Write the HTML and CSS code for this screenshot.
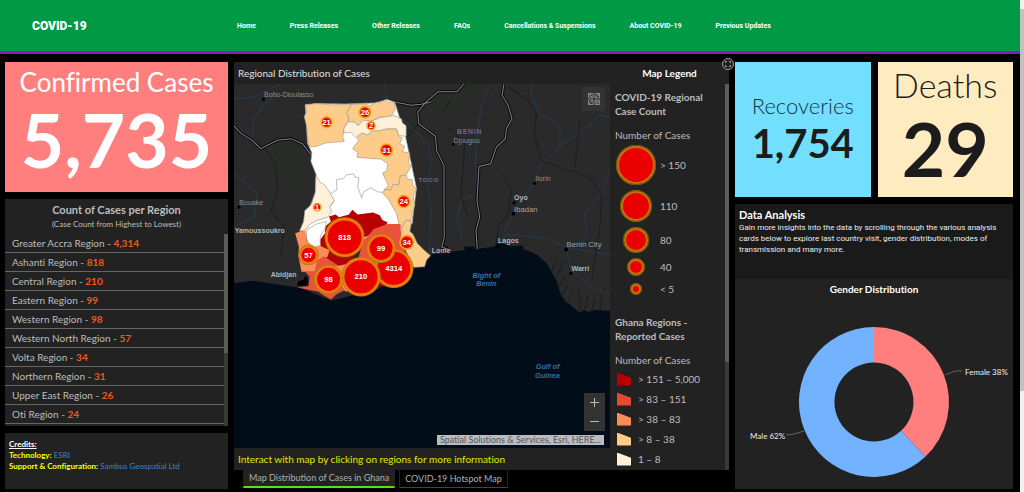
FILE: index.html
```html
<!DOCTYPE html>
<html lang="en">
<head>
  <meta charset="UTF-8">
  <meta name="viewport" content="width=device-width, initial-scale=1.0">
  <title>COVID-19</title>
  <link rel="stylesheet" href="styles.css">
</head>
<body>

<div class="page">
  <header class="header">
    <a class="brand" href="#">COVID-19</a>
    <nav class="nav">
      <a href="#">Home</a>
      <a href="#">Press Releases</a>
      <a href="#">Other Releases</a>
      <a href="#">FAQs</a>
      <a href="#">Cancellations &amp; Suspensions</a>
      <a href="#">About COVID-19</a>
      <a href="#">Previous Updates</a>
    </nav>
  </header>

  <main class="dashboard">
    <!-- Left column -->
    <div class="column">
      <section class="stat confirmed">
        <h2>Confirmed Cases</h2>
        <p>5,735</p>
      </section>

      <section class="card regions">
        <h3>Count of Cases per Region</h3>
        <p class="hint">(Case Count from Highest to Lowest)</p>
        <div class="scroll-area">
          <ul class="region-list">
            <li>Greater Accra Region - <b>4,314</b></li>
            <li>Ashanti Region - <b>818</b></li>
            <li>Central Region - <b>210</b></li>
            <li>Eastern Region - <b>99</b></li>
            <li>Western Region - <b>98</b></li>
            <li>Western North Region - <b>57</b></li>
            <li>Volta Region - <b>34</b></li>
            <li>Northern Region - <b>31</b></li>
            <li>Upper East Region - <b>26</b></li>
            <li>Oti Region - <b>24</b></li>
          </ul>
          <div class="track"><div class="thumb"></div></div>
        </div>
      </section>

      <section class="card credits">
        <p class="credits-title">Credits:</p>
        <p><b>Technology:</b> <a href="#">ESRI</a></p>
        <p><b>Support &amp; Configuration:</b> <a href="#">Sambus Geospatial Ltd</a></p>
      </section>
    </div>

    <!-- Map column -->
    <div class="column map-column">
      <section class="card map-card">
        <div class="map-side">
          <h3 class="map-title">Regional Distribution of Cases</h3>
          <div class="map">
            <svg class="map-svg" viewBox="0 0 1125 1092" preserveAspectRatio="xMidYMid slice" role="img" aria-label="Map of cases in Ghana">
              <rect class="land" width="1125" height="1092"/>
              <path class="forest" d="M92 190 150 165 200 195 215 280 170 320 120 260zM555 75 650 30 770 0 700 60 610 85 560 110z"/>
              <path class="sea" d="M0 597 60 590 120 600 200 612 290 650 430 615 538 550 590 512 660 502 723 496 788 486 820 492 858 493 880 500 908 513 935 538 953 568 965 590 973 618 980 635 993 653 1010 665 1033 685 1048 678 1060 684 1080 678 1125 680V1092H0z"/>
              <path class="sea" d="M690 488h30v10h-30zM780 484 800 478 830 487 866 485 864 497 790 496z"/>
              <path class="creek" d="M952 560 962 530M963 580 978 552 985 530M973 605 990 580M982 630 1000 604M1003 652 1012 622M1030 682 1038 650 1030 620M1050 676 1060 635M1070 680 1080 645M1095 676 1100 635 1112 610"/>
              <!-- Roads and rivers -->
              <g class="river">
                <path d="M770 0 742 60 730 140 722 230 726 330 680 350 668 400 682 470"/>
                <path d="M890 0 890 40 915 90 975 125 976 190 920 240 895 300 838 385 806 448"/>
                <path d="M976 185 1060 130 1090 95 1125 98M788 475 820 450 940 465 996 492 1125 512M996 500 1010 560 1060 600 1125 635M1125 260 1100 330 1050 390 1055 450 1040 490"/>
                <path d="M0 45 60 40 140 0M115 40 60 100 55 160M450 0 460 70 520 120 580 180 590 230 580 300 590 380 585 505"/>
                <path d="M90 50 130 20M0 270 70 330 60 400 0 430"/>
              </g>
              <g class="road">
                <path d="M820 10 880 50 905 90 900 160 920 230 1060 280 1100 330 1095 430 1070 590M1035 110 1020 250M640 130 690 180 680 340 700 400M800 270 830 320 820 390 790 430 785 480M90 190 125 240 130 320 110 380 150 430 140 520M560 110 520 160M620 90 650 50"/>
              </g>
              <!-- Borders -->
              <g class="border">
                <path d="M0 127 22 150 55 170 80 195 130 170 170 165 205 180 232 215M480 55 530 65 560 62 590 55M688 0 668 25 610 25 575 55 550 85 553 120 603 158 606 200 628 245 629 460 622 500 640 490M808 0 802 35 820 65 832 105 815 135 812 165 785 190 768 240 733 248 730 300 727 350 735 400 724 440 728 496"/>
              </g>
              <g class="border-line">
                <path d="M0 127 22 150 55 170 80 195 130 170 170 165 205 180 232 215M480 55 530 65 560 62 590 55M688 0 668 25 610 25 575 55 550 85 553 120 603 158 606 200 628 245 629 460 622 490 640 496M808 0 802 35 820 65 832 105 815 135 812 165 785 190 768 240 733 248 730 300 727 350 735 400 724 440 728 496"/>
              </g>

              <!-- Ghana regions -->
              <g class="region" transform="translate(168 18)">
                <path class="r0" d="M45 45 80 42 165 43 255 40 290 30 313 38 345 140 358 200 378 295 365 400 320 440 100 490 32 418 75 310 78 255 62 215 65 190 52 160z"/>
                <path class="r2" d="M45 47 80 42 120 46 183 44 178 56 169 68 176 90 162 112 160 130 157 142 162 155 105 160 80 170 58 171 52 145 50 112 42 80 50 68z"/>
                <path class="r2" d="M183 45 220 43 240 48 258 38 274 40 285 30 294 38 312 38 314 60 303 80 270 82 248 92 222 100 208 110 192 97 174 96 176 88 169 68 178 56z"/>
                <path class="r1" d="M174 96 192 97 204 108 218 92 245 94 270 84 303 79 312 78 333 88 336 100 347 108 347 140 325 138 318 118 290 118 265 124 245 124 232 136 215 130 198 145 182 128 162 130 160 118z"/>
                <path class="r2" d="M202 138 215 130 232 136 245 124 265 124 290 118 318 118 323 140 335 145 328 162 343 170 335 186 358 190 354 218 362 230 350 250 345 262 330 258 325 285 308 284 302 300 280 300 294 288 284 266 276 250 290 242 292 222 272 208 240 206 200 203 203 188 187 178 196 164 204 156z"/>
                <path class="r2" d="M330 258 345 256 352 268 366 270 366 285 378 297 368 318 373 345 364 372 367 400 358 390 345 392 334 414 325 400 318 370 304 346 292 326 275 308 285 300 302 300 308 284 325 285z"/>
                <path class="r2" d="M345 392 358 392 362 402 358 424 368 434 380 460 400 480 420 497 408 510 402 530 370 532 352 495 340 470 326 460 334 414z"/>
                <path class="r1" d="M77 255 90 278 102 284 120 310 132 332 118 350 124 366 112 382 80 392 58 404 46 420 28 424 40 396 44 362 64 344 76 305z"/>
                <path class="line" d="M120 312 140 300 138 270 160 266 168 256 190 252 194 262 206 264 202 290 214 325 220 306 240 294 262 306 276 308M132 332 120 350"/>
                <path class="r5" d="M116 380 136 374 146 382 176 374 186 360 202 374 248 368 268 376 276 390 292 398 282 410 250 418 240 435 215 445 190 500 160 530 120 518 92 475 88 452 104 430 105 410 122 395z"/>
                <path class="r0" d="M50 420 80 402 108 395 105 415 90 438 90 466 72 472 54 460 48 440z"/>
                <path class="r3" d="M15 430 45 420 50 452 70 472 90 468 118 480 112 500 86 512 74 545 34 545 25 500 26 470z"/>
                <path class="r4" d="M235 435 250 418 290 402 330 402 332 435 325 460 345 480 330 500 260 530 205 500 220 450z"/>
                <path class="r4" d="M80 512 100 498 150 530 160 560 165 600 140 612 122 628 98 615 85 605 50 598 22 592 55 588 58 560 45 545 74 545z"/>
                <path class="r3" d="M130 530 180 520 240 510 262 530 262 590 230 598 165 604 152 580z"/>
                <path class="r5" d="M258 530 300 505 345 485 368 530 345 570 270 590z"/>
              </g>

              <!-- Case bubbles -->
              <g class="bubbles" transform="translate(168 18)">
                <circle class="halo" cx="310" cy="535" r="59"/>
                <circle cx="310" cy="535" r="53"/>
                <circle class="halo" cx="163" cy="442" r="60"/>
                <circle cx="163" cy="442" r="54"/>
                <circle class="halo" cx="272" cy="475" r="44"/>
                <circle cx="272" cy="475" r="38"/>
                <circle class="halo" cx="212" cy="560" r="59"/>
                <circle cx="212" cy="560" r="53"/>
                <circle class="halo" cx="115" cy="568" r="44"/>
                <circle cx="115" cy="568" r="38"/>
                <circle class="halo" cx="55" cy="495" r="31"/>
                <circle cx="55" cy="495" r="25"/>
              </g>
              <g class="bubbles small" transform="translate(168 18)">
                <circle cx="349" cy="457" r="20"/>
                <circle cx="340" cy="335" r="18"/>
                <circle cx="288" cy="181" r="18"/>
                <circle cx="109" cy="98" r="16"/>
                <circle cx="224" cy="68" r="17"/>
                <circle cx="242" cy="108" r="12"/>
                <circle cx="81" cy="352" r="11"/>
              </g>
              <g class="counts" transform="translate(168 26)">
                <text x="310" y="535">4314</text>
                <text x="163" y="442">818</text>
                <text x="272" y="475">99</text>
                <text x="212" y="560">210</text>
                <text x="115" y="568">98</text>
                <text x="55" y="495">57</text>
                <text x="349" y="457">34</text>
                <text x="340" y="335">24</text>
                <text x="288" y="181">31</text>
                <text x="109" y="98">21</text>
                <text x="224" y="68">26</text>
                <text x="242" y="108">2</text>
                <text x="81" y="352">1</text>
              </g>

              <!-- Place names -->
              <g class="dots">
                <circle cx="88" cy="47" r="5"/>
                <circle cx="15" cy="370" r="5"/>
                <circle cx="656" cy="182" r="4"/>
                <circle cx="899" cy="299" r="5"/>
                <circle cx="838" cy="357" r="5"/>
                <circle cx="836" cy="390" r="6"/>
                <circle cx="788" cy="486" r="6"/>
                <circle cx="994" cy="497" r="6"/>
                <circle cx="1008" cy="568" r="5"/>
                <path d="M188 604 194 590 208 588 212 576 221 584 220 604z"/>
              </g>
              <g class="places">
                <text x="90" y="40">Bobo-Dioulasso</text>
                <text x="16" y="365">Bouake</text>
                <text x="2" y="448" class="strong">Yamoussoukro</text>
                <text x="110" y="578" class="strong">Abidjan</text>
                <text x="657" y="177">Djougou</text>
                <text x="902" y="292">Ilorin</text>
                <text x="838" y="350" class="strong">Oyo</text>
                <text x="838" y="383" class="big">Ibadan</text>
                <text x="790" y="478" class="strong">Lagos</text>
                <text x="592" y="508" class="strong">Lome</text>
                <text x="995" y="489" class="big">Benin City</text>
                <text x="1010" y="562" class="strong">Warri</text>
              </g>
              <g class="country">
                <text x="667" y="150">BENIN</text>
                <text x="552" y="294" class="dim">TOGO</text>
              </g>
              <g class="water">
                <text x="755" y="582">Bight of</text>
                <text x="755" y="606">Benin</text>
                <text x="938" y="854">Gulf of</text>
                <text x="938" y="881">Guinea</text>
              </g>
            </svg>

            <button class="map-btn basemap" aria-label="Basemap">
              <svg viewBox="0 0 12 12" width="12" height="12">
                <path d="M.5.5h4.500v4.500H.5zM7 .5h4.500v4.500H7zM.5 7h4.500v4.500H.5zM7 7h4.500v4.500H7zM.5.5 5 5M7 5l4.500-4.500M.5 11.500 5 7M7 9h4.500M9 7v4.500M2.500 1v3M9 2h2"/>
              </svg>
            </button>
            <div class="zoom">
              <button class="map-btn" aria-label="Zoom in">
                <svg viewBox="0 0 9 9" width="9" height="9"><path d="M4.500 0v9M0 4.500h9"/></svg>
              </button>
              <button class="map-btn" aria-label="Zoom out">
                <svg viewBox="0 0 9 9" width="9" height="9"><path d="M0 4.500h9"/></svg>
              </button>
            </div>
            <span class="attribution">Spatial Solutions &amp; Services, Esri, HERE...</span>
          </div>
          <p class="map-note">Interact with map by clicking on regions for more information</p>
        </div>

        <div class="legend-side">
          <h3 class="legend-title">Map Legend</h3>
          <div class="scroll-area">
            <div class="legend">
              <h4>COVID-19 Regional Case Count</h4>
              <p>Number of Cases</p>
              <ul class="sizes">
                <li><span class="size s1"></span>&gt; 150</li>
                <li><span class="size s2"></span>110</li>
                <li><span class="size s3"></span>80</li>
                <li><span class="size s4"></span>40</li>
                <li><span class="size s5"></span>&lt; 5</li>
              </ul>
              <h4>Ghana Regions - Reported Cases</h4>
              <p>Number of Cases</p>
              <ul class="classes">
                <li><span class="swatch c5"></span>&gt; 151 – 5,000</li>
                <li><span class="swatch c4"></span>&gt; 83 – 151</li>
                <li><span class="swatch c3"></span>&gt; 38 – 83</li>
                <li><span class="swatch c2"></span>&gt; 8 – 38</li>
                <li><span class="swatch c1"></span>1 – 8</li>
              </ul>
            </div>
            <div class="track"><div class="thumb legend-thumb"></div></div>
          </div>
        </div>

        <button class="expand" aria-label="Expand">
          <svg viewBox="0 0 12 12" width="12" height="12">
            <circle cx="6" cy="6" r="5.500"/>
            <path d="M3.500 5V3.500H5M7 3.500h1.500V5M8.500 7v1.500H7M5 8.500H3.500V7"/>
          </svg>
        </button>
      </section>

      <div class="tabs">
        <button class="tab active">Map Distribution of Cases in Ghana</button>
        <button class="tab">COVID-19 Hotspot Map</button>
      </div>
    </div>

    <!-- Right column -->
    <div class="column">
      <div class="stat-row">
        <section class="stat recoveries">
          <h2>Recoveries</h2>
          <p>1,754</p>
        </section>
        <section class="stat deaths">
          <h2>Deaths</h2>
          <p>29</p>
        </section>
      </div>

      <section class="card analysis">
        <div class="analysis-text">
          <h3>Data Analysis</h3>
          <p>Gain more insights into the data by scrolling through the various analysis cards below to explore last country visit, gender distribution, modes of transmission and many more.</p>
        </div>
        <h4 class="chart-title">Gender Distribution</h4>
        <svg class="chart" viewBox="0 0 278 190" role="img" aria-label="Gender distribution">
          <path class="female" d="M139 28A75 75 0 0 1 190.300 157.700L166 131.800A39.500 39.500 0 0 0 139 63.500z"/>
          <path class="male" d="M190.300 157.700A75 75 0 1 1 139 28V63.500A39.500 39.500 0 1 0 166 131.800z"/>
          <path class="leader" d="M210 76C216 74 220 71 227 72M69 132C62 134 58 136 51 136"/>
          <text x="230" y="76">Female 38%</text>
          <text x="15" y="140">Male 62%</text>
        </svg>
      </section>
    </div>
  </main>
</div>

<div class="page-scroll"><div class="page-thumb"></div></div>

</body>
</html>
```
FILE: styles.css
```css
* {
  box-sizing: border-box;
}
body {
  margin: 0;
  height: 100vh;
  display: flex;
  background: #000;
  color: #bdbdbd;
  font-family: Lato, "Open Sans", sans-serif;
  font-size: 10px;
  font-variant-ligatures: none;
  overflow: hidden;
}
h2, h3, h4, p, ul {
  margin: 0;
  padding: 0;
}
ul {
  list-style: none;
}
a {
  text-decoration: none;
}
button {
  font-family: inherit;
  padding: 0;
  border: none;
  cursor: pointer;
}
.page {
  flex: 1;
  min-width: 0;
  display: flex;
  flex-direction: column;
}
.page-scroll {
  width: 4px;
  background: #f1f1f1;
  padding-top: 9px;
}
.page-thumb {
  height: 79%;
  background: #c1c1c1;
}

/* Header */
.header {
  display: flex;
  align-items: center;
  height: 54px;
  padding-left: 32px;
  background: #009a47;
  border-bottom: 3px solid #8a1bb5;
}
.brand {
  width: 205px;
  color: #fff;
  font-family: Roboto, sans-serif;
  font-size: 12px;
  font-weight: 900;
}
.nav {
  display: flex;
  gap: 34px;
}
.nav a {
  color: #fff;
  font-family: Roboto, sans-serif;
  font-size: 7px;
  font-weight: bold;
  line-height: 12px;
  white-space: nowrap;
}

/* Dashboard */
.dashboard {
  flex: 1;
  min-height: 0;
  display: grid;
  grid-template-columns: 223fr 495fr 278fr;
  gap: 6px;
  padding: 8px 7px 3px 5px;
}
.column {
  min-width: 0;
  min-height: 0;
  display: flex;
  flex-direction: column;
  gap: 7px;
}
.card {
  background: #222;
}
.stat {
  display: flex;
  flex-direction: column;
  align-items: center;
  justify-content: center;
}
.stat h2 {
  font-weight: 300;
}
.stat p {
  font-weight: bold;
}
.confirmed {
  padding: 6px 0 10px;
  background: #ff7f7f;
  color: #fff;
}
.confirmed h2 {
  font-size: 26px;
  font-weight: 400;
  line-height: 28px;
}
.confirmed p {
  font-size: 75px;
  line-height: 86px;
}
.regions {
  flex: 1;
  min-height: 0;
  display: flex;
  flex-direction: column;
  padding-top: 4px;
  text-align: center;
}
.regions h3 {
  font-size: 11px;
  line-height: 14px;
}
.hint {
  font-size: 8px;
  line-height: 14px;
}
.scroll-area {
  flex: 1;
  min-height: 0;
  display: flex;
}
.track {
  width: 4px;
  background: #3a3a3a;
}
.thumb {
  height: 62%;
  background: #5c5c5c;
}
.regions .scroll-area {
  margin-top: 3px;
}
.region-list {
  flex: 1;
  overflow: hidden;
  text-align: left;
}
.region-list li {
  height: 19px;
  padding-left: 7px;
  border-bottom: 1px solid #666;
  font-size: 10px;
  line-height: 18px;
}
.region-list b {
  color: #f0591c;
}
.credits {
  height: 56px;
  padding: 6px 4px;
  font-size: 8px;
  line-height: 11px;
}
.credits-title {
  color: #fff;
  font-weight: bold;
  text-decoration: underline;
}
.credits b {
  color: #ff0;
}
.credits a {
  color: #3a86c8;
}

/* Map */
.map-column {
  gap: 0;
}
.map-card {
  position: relative;
  flex: 1;
  min-height: 0;
  display: flex;
}
.map-side {
  flex: 1;
  min-width: 0;
  display: flex;
  flex-direction: column;
}
.map-title {
  padding-left: 4px;
  color: #e0e0e0;
  font-size: 10px;
  font-weight: normal;
  line-height: 22px;
}
.map {
  position: relative;
  flex: 1;
  min-height: 0;
}
.map-svg {
  display: block;
  width: 100%;
  height: 100%;
}
.land {
  fill: #2a2a2a;
}
.forest {
  fill: #282d28;
}
.sea {
  fill: #010d18;
}
.creek {
  fill: none;
  stroke: #171d22;
  stroke-width: 3;
}
.river {
  fill: none;
  stroke: #263746;
  stroke-width: 4;
}
.road {
  fill: none;
  stroke: #1e1e21;
  stroke-width: 3;
}
.border {
  fill: none;
  stroke: #08080a;
  stroke-width: 9;
}
.border-line {
  fill: none;
  stroke: #85818a;
  stroke-width: 3;
}
.region path {
  stroke: #a09c94;
  stroke-width: 2;
  stroke-linejoin: round;
}
.r0 { fill: #fff; }
.r1 { fill: #fef0d9; }
.r2 { fill: #fdcc8a; }
.region .r3 { fill: #fc8d59; stroke: none; }
.region .r4 { fill: #e9533a; stroke: none; }
.region .r5 { fill: #b80000; stroke: none; }
.region .line { fill: none; }
.bubbles {
  fill: #ea0000;
  stroke: #f07a0c;
  stroke-width: 7;
}
.bubbles .halo {
  fill: #b0820c;
  stroke: none;
}
.small {
  stroke: #f7a41d;
  stroke-width: 5;
}
.counts {
  fill: #fff;
  font-family: "Liberation Sans", sans-serif;
  font-size: 23px;
  font-weight: bold;
  text-anchor: middle;
}
.places {
  fill: #8f8f8f;
  font-family: "Liberation Sans", sans-serif;
  font-size: 21px;
}
.places .big {
  fill: #a0a0a0;
  font-size: 23px;
}
.places .strong {
  fill: #b4b4b4;
  font-size: 21px;
  font-weight: bold;
}
.country {
  fill: #78628c;
  font-family: "Liberation Sans", sans-serif;
  font-size: 21px;
  font-weight: bold;
  letter-spacing: 2px;
}
.country .dim {
  font-size: 18px;
}
.water {
  fill: #3d6f9e;
  font-family: "Liberation Sans", sans-serif;
  font-size: 22px;
  font-style: italic;
  font-weight: bold;
  text-anchor: middle;
}
.dots {
  fill: #000;
}
.map-btn {
  display: flex;
  align-items: center;
  justify-content: center;
  background: #333;
}
.map-btn svg {
  fill: none;
  stroke: #bbb;
  stroke-width: 1;
}
.basemap {
  position: absolute;
  top: 3px;
  right: 5px;
  width: 23px;
  height: 24px;
}
.basemap svg {
  stroke: #888;
}
.zoom {
  position: absolute;
  right: 5px;
  bottom: 17px;
}
.zoom .map-btn {
  width: 21px;
  height: 19px;
}
.attribution {
  position: absolute;
  right: 6px;
  bottom: 3px;
  padding: 0 3px;
  background: #b9bcc1;
  color: #555;
  font-size: 9px;
  line-height: 10px;
}
.map-note {
  padding-left: 4px;
  color: #e6e600;
  font-size: 10px;
  line-height: 22px;
}
.legend-side {
  width: 119px;
  display: flex;
  flex-direction: column;
}
.legend-title {
  color: #fff;
  font-size: 10px;
  line-height: 22px;
  text-align: center;
}
.legend {
  flex: 1;
  min-width: 0;
  overflow: hidden;
  padding: 6px 14px 0 5px;
}
.legend h4 {
  font-size: 10px;
  line-height: 14px;
}
.legend p {
  margin-top: 9px;
  font-size: 10px;
  line-height: 16px;
}
.legend li {
  align-items: center;
}
.sizes {
  margin: 2px 0 18px;
}
.sizes li {
  display: grid;
  grid-template-columns: 42px 1fr;
  gap: 3px;
  min-height: 16px;
  margin-bottom: 5px;
}
.size {
  justify-self: center;
  border: 3px solid #c4700c;
  border-radius: 50%;
  background: #ea0000;
  outline: 1px solid #5c5a10;
  outline-offset: -1px;
}
.s1 { width: 40px; height: 40px; }
.s2 { width: 32px; height: 32px; }
.s3 { width: 26px; height: 26px; }
.s4 { width: 18px; height: 18px; }
.s5 { width: 12px; height: 12px; }
.classes {
  margin-top: 1px;
}
.classes li {
  display: flex;
  gap: 7px;
  height: 20px;
  padding-left: 2px;
  white-space: nowrap;
}
.swatch {
  width: 14px;
  height: 13px;
  clip-path: polygon(0 0, 100% 40%, 100% 100%, 0 100%);
}
.c5 { background: #b80000; }
.c4 { background: #e34a33; }
.c3 { background: #fc8d59; }
.c2 { background: #fdcc8a; }
.c1 { background: #fef0d9; }
.legend-thumb {
  height: 72%;
}
.expand {
  position: absolute;
  top: -4px;
  right: -5px;
  width: 12px;
  height: 12px;
  background: none;
}
.expand svg {
  display: block;
  fill: #222;
  stroke: #999;
  stroke-width: 1;
}
.tabs {
  display: flex;
  gap: 4px;
  height: 19px;
  padding: 0 9px 1px;
}
.tab {
  padding: 0 5px;
  background: #000;
  border: 1px solid #222;
  border-top: none;
  border-bottom: 1px solid #444;
  color: #b0b0b0;
  font-size: 9px;
  line-height: 16px;
}
.tab.active {
  background: #222;
  border-bottom: 2px solid #58e01c;
}

/* Right column */
.stat-row {
  display: grid;
  grid-template-columns: 1fr 1fr;
  gap: 7px;
  height: 135px;
}
.stat-row .stat {
  color: #1c1c1c;
}
.recoveries {
  padding-bottom: 2px;
  background: #73dfff;
}
.stat-row .recoveries h2 {
  color: #123644;
  font-size: 22px;
  line-height: 28px;
}
.recoveries p {
  font-size: 40px;
  line-height: 46px;
}
.deaths {
  padding-bottom: 3px;
  background: #ffebc0;
}
.deaths h2 {
  font-size: 34px;
  line-height: 40px;
}
.deaths p {
  font-size: 75px;
  line-height: 86px;
}
.analysis {
  flex: 1;
  min-height: 0;
  display: flex;
  flex-direction: column;
}
.analysis-text {
  height: 75px;
  padding: 4px 0 4px 4px;
  background: #1a1a1a;
  color: #eee;
}
.analysis-text h3 {
  color: #fff;
  font-size: 11px;
  line-height: 14px;
}
.analysis-text p {
  font-family: Roboto, sans-serif;
  font-size: 8px;
  line-height: 11px;
}
.chart-title {
  color: #fff;
  font-size: 10px;
  line-height: 20px;
  text-align: center;
}
.chart {
  flex: 1;
  min-height: 0;
  width: 100%;
}
.chart text {
  fill: #eee;
  font-size: 8px;
}
.female { fill: #ff7f7f; }
.male { fill: #73b2ff; }
.leader {
  fill: none;
  stroke: #666;
  stroke-width: 1;
}
```
